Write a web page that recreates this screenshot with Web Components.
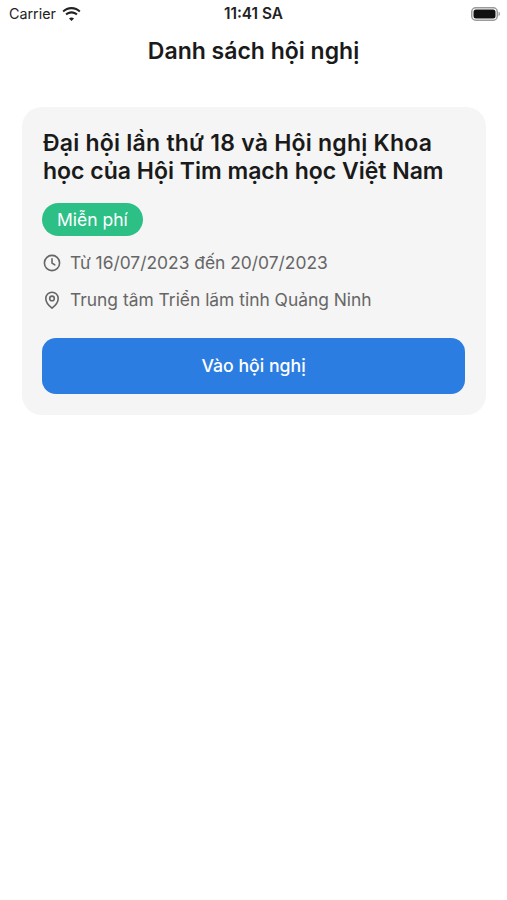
<!DOCTYPE html>
<html lang="vi">
<head>
<meta charset="utf-8">
<title>Danh sách hội nghị</title>
<style>
  html, body { margin: 0; background: #fff; }
  body { font-family: Inter, "Liberation Sans", sans-serif; }
</style>
</head>
<body>
<x-status-bar carrier="Carrier" time="11:41 SA"></x-status-bar>
<x-nav-title>Danh sách hội nghị</x-nav-title>
<x-conf-card dates="Từ 16/07/2023 đến 20/07/2023" place="Trung tâm Triển lãm tỉnh Quảng Ninh" price="Miễn phí" action="Vào hội nghị"><span style="letter-spacing:.23px">Đại hội lần thứ 18 và Hội nghị Khoa</span> học của Hội Tim mạch học Việt Nam</x-conf-card>

<script>
class XStatusBar extends HTMLElement {
  constructor(){
    super();
    const root = this.attachShadow({ mode: 'open' });
    root.innerHTML = `
      <style>
        :host{ display:grid; grid-template-columns:1fr auto 1fr; align-items:center; height:28px; padding:0 6px 0 9px; color:#222; font: 14.300px/28px Inter, "Liberation Sans", sans-serif; }
        .left{ display:flex; align-items:center; gap:6px; }
        .time{ font-weight:600; font-size:15.400px; margin-left:-3px; }
        .right{ display:flex; justify-content:flex-end; }
        svg{ display:block; }
      </style>
      <div class="left"><span id="carrier"></span>
        <svg width="19" height="14" viewBox="0 0 19 14"><path d="M9.5 2.2c3 0 5.7 1.2 7.7 3.1l1.3-1.5C16.200 1.500 13 0 9.500 0S2.800 1.500.5 3.800l1.300 1.500c2-1.900 4.700-3.100 7.700-3.100zm0 4.300c1.800 0 3.400.7 4.700 1.800l1.400-1.500C14 5.200 11.800 4.300 9.500 4.300s-4.500.9-6.100 2.500l1.400 1.500c1.300-1.100 2.900-1.800 4.700-1.800zm0 4.100c-1 0-1.900.4-2.500 1l2.500 2.400 2.500-2.400c-.6-.6-1.500-1-2.500-1z" fill="#222"/></svg>
      </div>
      <span class="time" id="time"></span>
      <div class="right">
        <svg width="30" height="14" viewBox="0 0 30 14"><rect x=".75" y=".75" width="25.500" height="12.500" rx="4" fill="none" stroke="#9a9a9a" stroke-width="1.500"/><rect x="2.500" y="2.500" width="22" height="9" rx="2.500" fill="#111"/><path d="M27.500 4.800c1 .3 1.600 1.200 1.600 2.200s-.6 1.900-1.600 2.200z" fill="#a5a5a5"/></svg>
      </div>`;
    root.getElementById('carrier').textContent = this.getAttribute('carrier');
    root.getElementById('time').textContent = this.getAttribute('time');
  }
}
customElements.define('x-status-bar', XStatusBar);

class XNavTitle extends HTMLElement {
  constructor(){
    super();
    this.attachShadow({ mode: 'open' }).innerHTML = `
      <style>
        :host{ display:block; height:79px; padding-top:9px; box-sizing:border-box; text-align:center; color:#1a1a1a; font: 600 23px/28px Inter, "Liberation Sans", sans-serif; }
      </style>
      <slot></slot>`;
  }
}
customElements.define('x-nav-title', XNavTitle);

class XInfoRow extends HTMLElement {
  constructor(){
    super();
    this.attachShadow({ mode: 'open' }).innerHTML = `
      <style>
        :host{ display:flex; align-items:center; gap:8px; height:26px; color:#666; font: 400 17.400px/26px Inter, "Liberation Sans", sans-serif; white-space:nowrap; }
        ::slotted(svg){ flex:none; display:block; }
      </style>
      <slot name="icon"></slot><slot></slot>`;
  }
}
customElements.define('x-info-row', XInfoRow);

class XConfCard extends HTMLElement {
  constructor(){
    super();
    const root = this.attachShadow({ mode: 'open' });
    root.innerHTML = `
      <style>
        :host{ display:block; margin:0 21px 0 22px; padding:22px 21px 21px 20px; background:#f5f5f5; border-radius:20px; }
        .title{ padding-left:1px; color:#1a1a1a; font: 600 23px/28px Inter, "Liberation Sans", sans-serif; }
        .badge{ display:inline-block; margin-top:18px; padding:0 15px; height:33px; border-radius:17px; background:#2cbf86; color:#fff; font: 400 17.500px/33px Inter, "Liberation Sans", sans-serif; }
        .rows{ display:grid; gap:11px; margin-top:14px; }
        .btn{ display:block; width:100%; height:56px; margin-top:25px; border:0; padding:0; border-radius:14px; background:#2b7de1; color:#fff; font: 500 17.700px/56px Inter, "Liberation Sans", sans-serif; text-align:center; }
      </style>
      <div class="title"><slot></slot></div>
      <div class="badge" id="price"></div>
      <div class="rows">
        <x-info-row id="dates">
          <svg slot="icon" width="20" height="20" viewBox="0 0 20 20" fill="none" stroke="#666" stroke-width="1.600" stroke-linecap="round" stroke-linejoin="round"><circle cx="10" cy="10" r="7.600"/><path d="M10 5.800V10l2.800 1.800"/></svg>
        </x-info-row>
        <x-info-row id="place">
          <svg slot="icon" width="20" height="20" viewBox="0 0 20 20" fill="none" stroke="#666" stroke-width="1.600" stroke-linejoin="round"><path d="M10 18.200s-6.200-5-6.200-9.800a6.200 6.200 0 0 1 12.400 0c0 4.800-6.200 9.800-6.200 9.800z"/><circle cx="10" cy="8.400" r="2.300"/></svg>
        </x-info-row>
      </div>
      <button class="btn" id="action" type="button"></button>`;
    root.getElementById('price').textContent = this.getAttribute('price');
    root.getElementById('dates').append(this.getAttribute('dates'));
    root.getElementById('place').append(this.getAttribute('place'));
    root.getElementById('action').textContent = this.getAttribute('action');
  }
}
customElements.define('x-conf-card', XConfCard);
</script>
</body>
</html>
